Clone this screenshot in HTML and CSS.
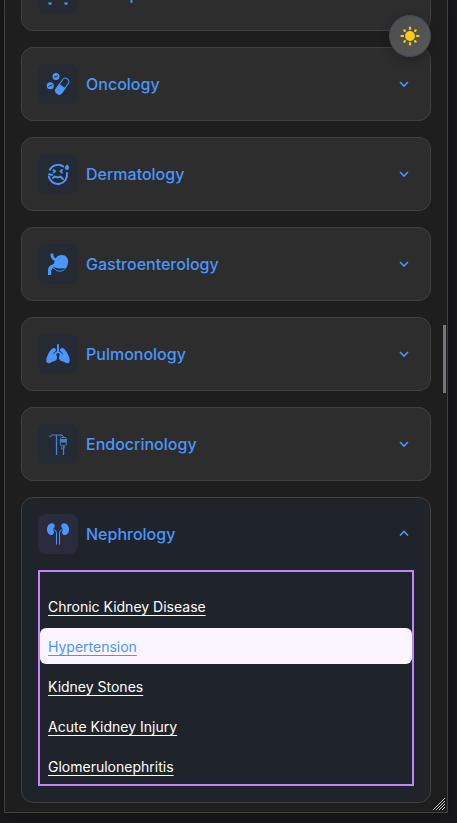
FILE: index.html
```html
<!DOCTYPE html>
<html lang="en">
<head>
<meta charset="utf-8">
<meta name="viewport" content="width=device-width, initial-scale=1">
<title>Specialties</title>
<link rel="stylesheet" href="styles.css">
</head>
<body>
<main class="panel">
  <section class="card">
    <button class="card-header" type="button" aria-expanded="false">
      <span class="icon-tile"><svg class="icon" viewBox="0 0 24 24" aria-hidden="true"><path d="M2 20.500h4l-1 2.300H3zM18 20.500h4l-1 2.300h-2z" fill="currentColor"/></svg></span>
      <span class="card-title">Orthopedics</span>
      <svg class="chevron" viewBox="0 0 12 12" aria-hidden="true"><path d="M2 4l4 4 4-4"/></svg>
    </button>
  </section>

  <section class="card">
    <button class="card-header" type="button" aria-expanded="false">
      <span class="icon-tile"><svg class="icon" viewBox="0 0 24 24" aria-hidden="true">
        <circle cx="10" cy="4.500" r="3.500" fill="currentColor"/><path class="cut" d="M8 5.200l4-1.400"/>
        <circle cx="4.300" cy="13.700" r="3.500" fill="currentColor"/><path class="cut" d="M2.500 14.500l3.800-1.700"/>
        <g transform="rotate(35 16.3 14.1)"><rect x="12.900" y="5.300" width="6.800" height="17.600" rx="3.400" fill="none" stroke="currentColor"/><path d="M12.400 14h7.800v5.500a3.900 3.900 0 0 1-7.800 0z" fill="currentColor"/></g>
      </svg></span>
      <span class="card-title">Oncology</span>
      <svg class="chevron" viewBox="0 0 12 12" aria-hidden="true"><path d="M2 4l4 4 4-4"/></svg>
    </button>
  </section>

  <section class="card">
    <button class="card-header" type="button" aria-expanded="false">
      <span class="icon-tile"><svg class="icon" viewBox="0 0 24 24" aria-hidden="true">
        <g fill="none" stroke="currentColor" stroke-width="1.900" stroke-linecap="round" stroke-linejoin="round">
          <path d="M17.300 4.500A9.200 9.200 0 0 0 3.800 7.800M2.800 14.500A9.200 9.200 0 0 0 20.900 11"/>
          <path d="M7.500 8l1.500 1.200-1.500 1.200M16 8l-1.500 1.200 1.500 1.200M3 12.200l3 .8M6.800 16l2-1.600 2.200 1 3.500-.6 2.500 2.200"/>
        </g>
        <path d="M21.200 2.200c1 1.400 1.900 2.400 1.900 3.600a2.100 2.100 0 0 1-4.200 0c0-1.200 1.200-2.200 2.300-3.600z" fill="currentColor"/>
      </svg></span>
      <span class="card-title">Dermatology</span>
      <svg class="chevron" viewBox="0 0 12 12" aria-hidden="true"><path d="M2 4l4 4 4-4"/></svg>
    </button>
  </section>

  <section class="card">
    <button class="card-header" type="button" aria-expanded="false">
      <span class="icon-tile"><svg class="icon" viewBox="0 0 24 24" aria-hidden="true">
        <path d="M4.500 1.500h2.900c-.2 2.700.8 4.200 2.500 4.700 1-2 3.200-3.200 6-3.200 4 0 6.200 2.900 6.200 6.700 0 2.500-.7 4.400-2 6-3 .8-6 1-9.500.2-2-.5-3.500-.8-4.500 1-.8 1-.9 2-.9 3v3.100H2v-5c0-2.600 1.500-4.500 4-5.200 1.700-.6 2.700-1.800 2.600-4C5.800 8 4.300 5.500 4.500 1.500z" fill="currentColor"/>
        <path d="M7 16c2.200.5 3 3.200 6.500 3.200 3 0 5.600-1.700 6.700-4.200" fill="none" stroke="currentColor"/>
      </svg></span>
      <span class="card-title">Gastroenterology</span>
      <svg class="chevron" viewBox="0 0 12 12" aria-hidden="true"><path d="M2 4l4 4 4-4"/></svg>
    </button>
  </section>

  <section class="card">
    <button class="card-header" type="button" aria-expanded="false">
      <span class="icon-tile"><svg class="icon" viewBox="0 0 24 24" aria-hidden="true">
        <path d="M12 3v7M8 12.500l4-2.800 4 2.800" fill="none" stroke="currentColor" stroke-width="1.900" stroke-linecap="round"/>
        <path d="M8 6c1.400 0 2 1 2 2.800L7.500 11c-1 1 0 2.400 1.200 1.800l1.500-.8c.3 1.200.8 2.300.8 3.800 0 3.700-4.200 3.400-5.700 4.500-2.500 1.600-5 1-5-1.500C.3 14 4.900 6 8 6zM16 6c-1.400 0-2 1-2 2.800l2.500 2.200c1 1 0 2.400-1.200 1.800l-1.500-.8c-.3 1.200-.8 2.300-.8 3.800 0 3.700 4.200 3.400 5.700 4.500 2.500 1.600 5 1 5-1.500C23.700 14 19.100 6 16 6z" fill="currentColor"/>
      </svg></span>
      <span class="card-title">Pulmonology</span>
      <svg class="chevron" viewBox="0 0 12 12" aria-hidden="true"><path d="M2 4l4 4 4-4"/></svg>
    </button>
  </section>

  <section class="card">
    <button class="card-header" type="button" aria-expanded="false">
      <span class="icon-tile"><svg class="icon icon-thin" viewBox="0 0 24 24" aria-hidden="true">
        <path d="M5 3h10.500M3 4.300h2.500M14 4.500l2-1.800 1.500 2.300M17.500 14v3" fill="none" stroke="currentColor"/>
        <path d="M10.500 3v20M17.500 17v6" fill="none" stroke="currentColor" stroke-width="1.300"/>
        <path d="M15.500 15v2h2M18.500 14.500v2" fill="none" stroke="currentColor" stroke-width=".8"/>
        <path d="M15.500 5.500h4l.8 1.500v6l-1 .8h-4.300l-.7-.8V7z" fill="none" stroke="currentColor"/>
        <path d="M14.500 7h6v3.500h-6z" fill="currentColor"/>
      </svg></span>
      <span class="card-title">Endocrinology</span>
      <svg class="chevron" viewBox="0 0 12 12" aria-hidden="true"><path d="M2 4l4 4 4-4"/></svg>
    </button>
  </section>

  <section class="card card-open">
    <button class="card-header" type="button" aria-expanded="true" aria-controls="nephrology-list">
      <span class="icon-tile"><svg class="icon" viewBox="0 0 24 24" aria-hidden="true">
        <path d="M5.800 1.200c2-.2 3.200 1.300 3 3.100-.2 1.600-1.700 1.900-1.600 3.300.1 1.200.8 1.600.7 2.800-.1 1.700-1.600 3-3.300 2.600C2 12.400.8 9.800 1 7c.2-3 2-5.600 4.800-5.800zM18.200 1.200c-2-.2-3.200 1.300-3 3.100.2 1.600 1.700 1.900 1.600 3.300-.1 1.200-.8 1.600-.7 2.800.1 1.700 1.600 3 3.300 2.600 2.600-.6 3.800-3.200 3.600-6-.2-3-2-5.600-4.800-5.800z" fill="currentColor"/>
        <path d="M7.500 7.500c2.200.5 3 2 3 4.500v10.500M16.500 7.500c-2.200.5-3 2-3 4.500v10.500" fill="none" stroke="currentColor"/>
      </svg></span>
      <span class="card-title">Nephrology</span>
      <svg class="chevron" viewBox="0 0 12 12" aria-hidden="true"><path d="M2 7.500l4-4 4 4"/></svg>
    </button>
    <ul class="conditions" id="nephrology-list">
      <li class="condition"><a href="#chronic-kidney-disease">Chronic Kidney Disease</a></li>
      <li class="condition condition-active"><a href="#hypertension">Hypertension</a></li>
      <li class="condition"><a href="#kidney-stones">Kidney Stones</a></li>
      <li class="condition"><a href="#acute-kidney-injury">Acute Kidney Injury</a></li>
      <li class="condition"><a href="#glomerulonephritis">Glomerulonephritis</a></li>
    </ul>
  </section>

  <span class="scroll-thumb"></span>
  <svg class="resize-grip" viewBox="0 0 14 14" aria-hidden="true"><path d="M1 13L13 1M4 13l9-9M7 13l6-6M10 13l3-3"/></svg>
</main>

<button class="theme-toggle" type="button" aria-label="Switch to light theme">
  <svg class="sun" viewBox="0 0 20 20" aria-hidden="true">
    <circle cx="10" cy="10" r="4.900" fill="currentColor"/>
    <path d="M10 1.500v1.500M10 17v1.500M1.500 10h1.500M17 10h1.500M4.300 4.300l.6.6M15.100 15.100l.6.6M15.700 4.300l-.6.6M4.900 15.100l-.6.6" fill="none" stroke="currentColor" stroke-width="2.200" stroke-linecap="round"/>
  </svg>
</button>
</body>
</html>
```
FILE: styles.css
```css
* {
  box-sizing: border-box;
}

body {
  margin: 0;
  height: 100vh;
  padding: 0 9px 10px 4px;
  overflow: hidden;
  background: #18181a;
  font-family: Inter, "Liberation Sans", sans-serif;
  font-size: 16px;
  color: #fff;
}

.panel {
  position: relative;
  display: flex;
  flex-direction: column;
  justify-content: flex-end;
  gap: 16px;
  height: 100%;
  padding: 0 16px 9px;
  overflow: hidden;
  background: #1e1e1e;
  border: 1px solid #404040;
  border-top: 0;
  box-shadow: 0 0 12px rgba(0, 0, 0, 0.3);
}

.card {
  flex: none;
  padding: 16px;
  background: #2d2d2d;
  border: 1px solid #404040;
  border-radius: 12px;
}

.card-open {
  background: #1f242b;
}

.card-header {
  display: flex;
  align-items: center;
  gap: 8px;
  width: 100%;
  padding: 0;
  background: none;
  border: 0;
  color: #4a96ff;
  font: inherit;
  font-weight: 500;
  text-align: left;
  cursor: pointer;
}

.icon-tile {
  display: flex;
  align-items: center;
  justify-content: center;
  width: 40px;
  height: 40px;
  background: #262b33;
  border-radius: 8px;
}

.card-open .icon-tile {
  background: #2a2b3d;
}

.icon {
  width: 24px;
  height: 24px;
}

.icon-thin {
  opacity: 0.8;
}

.cut {
  fill: none;
  stroke: #262b33;
  stroke-width: 1;
}

.card-title {
  flex: 1;
}

.chevron {
  width: 12px;
  height: 12px;
  margin-right: 4px;
  fill: none;
  stroke: currentColor;
  stroke-width: 1.6;
}

.conditions {
  display: flex;
  flex-direction: column;
  gap: 4px;
  margin: 16px 0 0;
  padding: 16px 0 0;
  border: 2px solid #c084fc;
  list-style: none;
}

.condition {
  height: 36px;
  padding: 2px 8px 0;
  border-radius: 6px;
  font-size: 14px;
  line-height: 34px;
}

.condition a {
  color: #fff;
  text-decoration: underline;
  text-decoration-thickness: 1px;
  text-underline-offset: 3px;
}

.condition-active {
  background: #faf5ff;
}

.condition-active a {
  color: #4a96ff;
}

.scroll-thumb {
  position: absolute;
  top: 40%;
  right: 1px;
  width: 3px;
  height: 68px;
  background: #77777f;
}

.resize-grip {
  position: absolute;
  right: 1px;
  bottom: 1px;
  width: 14px;
  height: 14px;
  fill: none;
  stroke: #bdbdbd;
}

.theme-toggle {
  position: fixed;
  top: 15px;
  right: 26px;
  display: flex;
  align-items: center;
  justify-content: center;
  width: 42px;
  height: 42px;
  padding: 0;
  background: linear-gradient(135deg, #4c4c4c, #585858);
  border: 1px solid #414b5a;
  border-radius: 50%;
  box-shadow: 0 4px 12px rgba(0, 0, 0, 0.2);
  color: #facc15;
  cursor: pointer;
}

.sun {
  width: 20px;
  height: 20px;
}
```
